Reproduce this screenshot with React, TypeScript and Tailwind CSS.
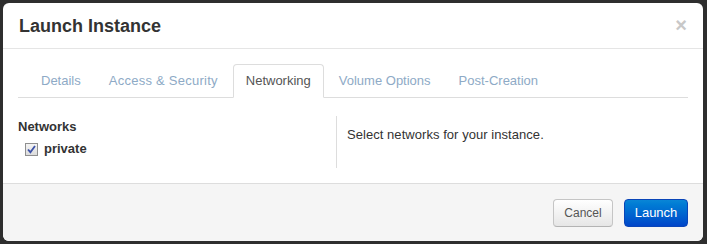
import { useState } from 'react';

const tabs = ['Details', 'Access & Security', 'Networking', 'Volume Options', 'Post-Creation'];

export default function App() {
  const [active, setActive] = useState('Networking');
  const [checked, setChecked] = useState(true);

  return (
    <div className="w-[707px] h-[244px] bg-[#2e2e2e] pt-[3px] pl-[3px] font-['Liberation_Sans',Arial,sans-serif] text-[13px] text-[#333]">
      <div className="w-[700px] h-[238px] bg-white rounded-[6px] overflow-hidden flex flex-col">
        {/* header */}
        <div className="h-[46px] shrink-0 border-b border-[#e5e5e5] pl-[16px] pr-[16px] flex items-center justify-between">
          <h3 className="text-[18px] leading-[20px] font-bold text-[#333]">Launch Instance</h3>
          <button className="text-[20px] leading-[20px] font-bold text-[#c8c8c8] -mt-[1px]">×</button>
        </div>

        {/* body */}
        <div className="h-[134px] shrink-0 px-[15px] pt-[15px]">
          <ul className="h-[34px] flex border-b border-[#ddd] pl-[10px]">
            {tabs.map(t => (
              <li key={t} className="-mb-[1px]">
                <button
                  onClick={() => setActive(t)}
                  className={`h-[34px] px-[12px] mr-[2px] leading-[18px] border rounded-t-[4px] ${
                    t === 'Access & Security' ? 'tracking-[0.25px]' : ''
                  } ${
                    active === t
                      ? 'bg-white border-[#ddd] border-b-transparent text-[#555]'
                      : 'border-transparent text-[#8eaac6]'
                  }`}
                >
                  {t}
                </button>
              </li>
            ))}
          </ul>

          <div className="mt-[18px] flex h-[52px]">
            <div className="w-[318px] pt-[2px]">
              <div className="font-bold leading-[18px] mb-[4px]">Networks</div>
              <label className="flex items-center h-[18px] ml-[7px] font-bold cursor-pointer" onClick={() => setChecked(c => !c)}>
                <span className="w-[13px] h-[13px] border border-[#8f8f8f] bg-gradient-to-b from-[#f4f4f4] to-[#dcdcdc] flex items-center justify-center">
                  {checked && (
                    <svg width="9" height="9" viewBox="0 0 9 9">
                      <path d="M1 4.5 L3.4 7.2 L8 1" fill="none" stroke="#3d52a8" strokeWidth="1.8" />
                    </svg>
                  )}
                </span>
                <span className="ml-[6px]">private</span>
              </label>
            </div>
            <div className="border-l border-[#ddd] pl-[10px] pt-[10px] leading-[18px] tracking-[0.05px]">
              Select networks for your instance.
            </div>
          </div>
        </div>

        {/* footer */}
        <div className="flex-1 border-t border-[#ddd] bg-[#f5f5f5] flex items-center justify-end pr-[15px] gap-[11px]">
          <button className="w-[60px] h-[28px] rounded-[4px] border border-[#c5c5c5] border-b-[#b3b3b3] bg-gradient-to-b from-white to-[#e6e6e6] text-[12px] text-[#555] shadow-[inset_0_1px_0_rgba(255,255,255,0.2)]">
            Cancel
          </button>
          <button className="w-[64px] h-[28px] rounded-[4px] border border-[#0a45b8] bg-gradient-to-b from-[#0a86d6] to-[#0045c9] text-[13px] text-white">
            Launch
          </button>
        </div>
      </div>
    </div>
  );
}
